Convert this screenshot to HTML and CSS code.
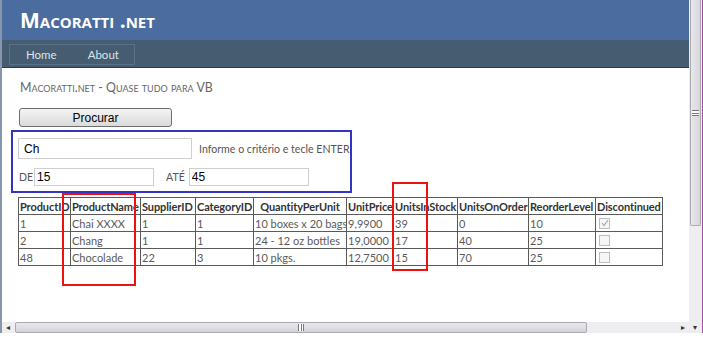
FILE: index.html
```html
<!DOCTYPE html>
<html lang="pt">
<head>
  <meta charset="UTF-8" />
  <title>Macoratti .net</title>
  <link rel="stylesheet" href="styles.css">
</head>
<body>

<div class="window">
  <div class="viewport">
    <div class="header">
      <h1 class="title">Macoratti .net</h1>
    </div>
    <div class="nav">
      <div class="menu">
        <span class="menu-item">Home</span>
        <span class="menu-item">About</span>
      </div>
    </div>

    <div class="main">
      <h2 class="subtitle">Macoratti.net - Quase tudo para VB</h2>
      <button class="btn">Procurar</button>

      <div class="filter-box">
        <div class="filter-row">
          <input class="field field-name" type="text" value="Ch" />
          <span class="hint">Informe o critério e tecle ENTER</span>
        </div>
        <div class="filter-row range-row">
          <span class="lbl">DE</span>
          <input class="field field-range" type="text" value="15" />
          <span class="lbl lbl-ate">ATÉ</span>
          <input class="field field-range" type="text" value="45" />
        </div>
      </div>

      <div class="grid-wrap">
        <table class="grid">
          <colgroup>
            <col style="width:52px"><col style="width:70px"><col style="width:55px"><col style="width:58px">
            <col style="width:93px"><col style="width:47px"><col style="width:64px"><col style="width:71px">
            <col style="width:67px"><col style="width:67px">
          </colgroup>
          <tr>
            <th>ProductID</th><th>ProductName</th><th>SupplierID</th><th>CategoryID</th>
            <th class="center">QuantityPerUnit</th><th>UnitPrice</th><th>UnitsInStock</th>
            <th>UnitsOnOrder</th><th>ReorderLevel</th><th>Discontinued</th>
          </tr>
          <tr>
            <td>1</td><td>Chai XXXX</td><td>1</td><td>1</td><td>10 boxes x 20 bags</td>
            <td>9,9900</td><td>39</td><td>0</td><td>10</td>
            <td><span class="chk checked"><svg width="8" height="8" viewBox="0 0 8 8"><path d="M1 4 L3 6.5 L7 1" fill="none" stroke="#a8a8a8" stroke-width="1.2"/></svg></span></td>
          </tr>
          <tr>
            <td>2</td><td>Chang</td><td>1</td><td>1</td><td>24 - 12 oz bottles</td>
            <td>19,0000</td><td>17</td><td>40</td><td>25</td>
            <td><span class="chk"></span></td>
          </tr>
          <tr>
            <td>48</td><td>Chocolade</td><td>22</td><td>3</td><td>10 pkgs.</td>
            <td>12,7500</td><td>15</td><td>70</td><td>25</td>
            <td><span class="chk"></span></td>
          </tr>
        </table>
        <div class="mark mark-name"></div>
        <div class="mark mark-stock"></div>
      </div>
    </div>
  </div>

  <div class="vscroll">
    <div class="vthumb"><span class="grip-h"></span></div>
    <div class="vtrack"></div>
    <div class="arrow">&#9662;</div>
  </div>

  <div class="hscroll">
    <div class="arrow">&#9666;</div>
    <div class="hthumb"><span class="grip-v"></span></div>
    <div class="htrack"></div>
    <div class="arrow">&#9656;</div>
  </div>
</div>

</body>
</html>
```

FILE: styles.css
```css
* {
  box-sizing: border-box;
}

body {
  margin: 0;
  font-family: Lato, 'Open Sans', sans-serif;
  background: #fff;
}

.window {
  width: 703px;
  height: 342px;
  display: grid;
  grid-template-columns: 689px 14px;
  grid-template-rows: 322px 11px 9px;
  overflow: hidden;
}

.viewport {
  grid-column: 1;
  grid-row: 1;
  overflow: hidden;
  border-left: 2px solid #8795ad;
}

.header {
  height: 40px;
  background: #4b6c9e;
  padding-left: 18px;
}

.title {
  margin: 0;
  font-family: 'Open Sans', sans-serif;
  font-size: 21px;
  line-height: 40px;
  font-weight: bold;
  font-variant: small-caps;
  color: #fff;
}

.nav {
  height: 28px;
  background: #465c71;
  padding: 3px 0 0 7px;
  border-bottom: 1px solid #2f3a45;
}

.menu {
  display: inline-flex;
  height: 21px;
  border: 1px solid #5b7189;
}

.menu-item {
  padding: 0 15px 0 16px;
  font-size: 11.5px;
  line-height: 19px;
  color: #dde4ec;
}

.main {
  padding-left: 9px;
}

.subtitle {
  margin: 11px 0 0 9px;
  font-size: 12.4px;
  line-height: 18px;
  font-weight: normal;
  font-variant: small-caps;
  color: #666;
}

.btn {
  display: block;
  margin: 11px 0 0 8px;
  width: 153px;
  height: 19px;
  padding: 0;
  border: 1px solid #6e6e6e;
  border-radius: 3px;
  background: linear-gradient(#f4f4f4, #dadada);
  font-family: 'Liberation Sans', Arial, sans-serif;
  font-size: 12px;
  color: #000;
}

.filter-box {
  width: 341px;
  margin-top: 3px;
  border: 2px solid #3434c4;
  padding: 6px 0 5px 5px;
}

.filter-row {
  display: flex;
  align-items: center;
}

.range-row {
  margin-top: 9px;
}

.field {
  flex-shrink: 0;
  border: 1px solid #cfcfcf;
  font-family: 'Liberation Sans', Arial, sans-serif;
  font-size: 12px;
  color: #000;
  padding: 0 0 0 5px;
  outline: none;
}

.field-name {
  width: 174px;
  height: 21px;
}

.field-range {
  width: 120px;
  height: 18px;
  padding-left: 2px;
}

.hint {
  margin-left: 7px;
  font-size: 10.6px;
  color: #555;
  white-space: nowrap;
}

.lbl {
  font-size: 10.5px;
  color: #555;
  margin: 0 1px 0 1px;
}

.lbl-ate {
  margin-left: 12px;
  margin-right: 4px;
}

.grid-wrap {
  position: relative;
  margin: 4px 0 0 7px;
}

.grid {
  border-collapse: collapse;
  table-layout: fixed;
  width: 645px;
  font-size: 11px;
  color: #5a5a5a;
}

.grid th,
.grid td {
  border: 1px solid #5a5a5a;
  padding: 0 1px;
  height: 17px;
  line-height: 15px;
  white-space: nowrap;
  overflow: hidden;
  text-align: left;
}

.grid th {
  color: #333;
  font-size: 11px;
  font-weight: bold;
  letter-spacing: -0.1px;
}

.grid th.center {
  text-align: center;
}

.chk {
  display: inline-flex;
  align-items: center;
  justify-content: center;
  width: 11px;
  height: 11px;
  margin: 2px 0 0 2px;
  border: 1px solid #bdbdbd;
  background: #f6f6f6;
  vertical-align: top;
}

.mark {
  position: absolute;
  border: 2px solid #ee1111;
}

.mark-name {
  left: 44px;
  top: -4px;
  width: 74px;
  height: 93px;
}

.mark-stock {
  left: 374px;
  top: -15px;
  width: 36px;
  height: 89px;
}

.vscroll {
  grid-column: 2;
  grid-row: 1 / 3;
  display: flex;
  flex-direction: column;
  background: #eeeef1;
  border-right: 1px solid #a84aa8;
}

.vthumb {
  height: 226px;
  margin: 0 1px;
  border: 1px solid #a9a9b0;
  border-top: none;
  border-radius: 0 0 2px 2px;
  background: linear-gradient(90deg, #e9e9ec, #d6d6dc);
  display: flex;
  align-items: center;
  justify-content: center;
}

.grip-h {
  width: 7px;
  height: 6px;
  border-top: 1px solid #777;
  border-bottom: 1px solid #777;
  background: linear-gradient(#fff 2px, #777 2px, #777 3px, #fff 3px);
}

.vtrack,
.htrack {
  flex: 1;
}

.arrow {
  width: 12px;
  height: 11px;
  font-size: 8px;
  line-height: 11px;
  text-align: center;
  color: #333;
}

.hscroll {
  grid-column: 1;
  grid-row: 2;
  display: flex;
  background: #eeeef1;
  border-left: 2px solid #8795ad;
}

.hthumb {
  width: 572px;
  margin-left: 1px;
  border: 1px solid #a9a9b0;
  border-radius: 2px;
  background: linear-gradient(#e9e9ec, #d3d3da);
  display: flex;
  align-items: center;
  justify-content: center;
}

.grip-v {
  width: 6px;
  height: 7px;
  border-left: 1px solid #777;
  border-right: 1px solid #777;
  background: linear-gradient(90deg, #fff 2px, #777 2px, #777 3px, #fff 3px);
}
```
